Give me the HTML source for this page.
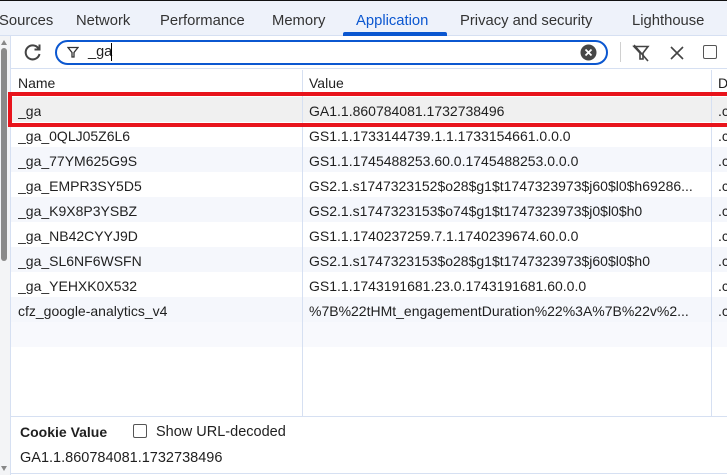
<!DOCTYPE html>
<html><head><style>
*{margin:0;padding:0;box-sizing:border-box}
body{width:727px;height:475px;overflow:hidden;background:#fff;font-family:"Liberation Sans",sans-serif;font-size:14px;color:#1f1f1f;position:relative}
.abs{position:absolute}
.tabs{left:0;top:0;width:727px;height:36px;background:#eef2fa;border-top:1px solid #111;border-bottom:1px solid #d6e0f2}
.tab{position:absolute;top:12px;font-size:14.8px;color:#333}
.cell{position:absolute;white-space:nowrap;overflow:hidden;font-size:14px;color:#1f1f1f}
</style></head><body>
<div class="abs tabs">
<span class="tab" style="left:-1px">Sources</span>
<span class="tab" style="left:76px">Network</span>
<span class="tab" style="left:160px">Performance</span>
<span class="tab" style="left:272px">Memory</span>
<span class="tab" style="left:356px;color:#0b57d0">Application</span>
<span class="tab" style="left:460px">Privacy and security</span>
<span class="tab" style="left:632px">Lighthouse</span>
<div class="abs" style="left:343px;top:31px;width:104px;height:4px;background:#0b57d0;border-radius:2px 2px 0 0"></div>
</div>
<div class="abs" style="left:0;top:36px;width:11px;height:439px;background:#f3f4f6;border-right:1px solid #d6e0f2"></div>
<div class="abs" style="left:1px;top:48px;width:6px;height:213px;background:#8a8a8a;border-radius:3px"></div>
<div class="abs" style="left:1px;top:40px;width:0;height:0;border-left:3px solid transparent;border-right:3px solid transparent;border-bottom:5px solid #888"></div>
<div class="abs" style="left:1px;top:466px;width:0;height:0;border-left:3px solid transparent;border-right:3px solid transparent;border-top:5px solid #888"></div>
<div class="abs" style="left:11px;top:36px;width:716px;height:33px;background:#fff;border-bottom:1px solid #d6e0f2"></div>
<svg class="abs" style="left:23px;top:42px" width="20" height="20" viewBox="0 0 20 20"><path d="M15.5 6.5A7 7 0 1 0 16.5 12" fill="none" stroke="#444" stroke-width="2"/><path d="M16.5 2.5v5h-5" fill="none" stroke="#444" stroke-width="2"/></svg>
<div class="abs" style="left:55px;top:40px;width:553px;height:25px;border:2px solid #0b57d0;border-radius:13px"></div>
<svg class="abs" style="left:67px;top:46px" width="12" height="12" viewBox="0 0 12 12"><path d="M1 1.5h10L7 6.5v4.5H5V6.5z" fill="none" stroke="#333" stroke-width="1.3"/></svg>
<span class="abs" style="left:88px;top:44px;font-size:14.5px">_ga</span>
<div class="abs" style="left:111px;top:43px;width:1px;height:18px;background:#000"></div>
<svg class="abs" style="left:580px;top:44px" width="17" height="17" viewBox="0 0 17 17"><circle cx="8.5" cy="8.5" r="8" fill="#474747"/><path d="M5.5 5.5l6 6M11.5 5.5l-6 6" stroke="#fff" stroke-width="1.8"/></svg>
<div class="abs" style="left:620px;top:42px;width:1px;height:20px;background:#d0d0d0"></div>
<svg class="abs" style="left:631px;top:43px" width="20" height="20" viewBox="0 0 20 20"><path d="M3 3.5h14L12 10v6H9v-6z" fill="none" stroke="#444" stroke-width="1.6"/><path d="M3 2l14 16" stroke="#444" stroke-width="1.6"/></svg>
<svg class="abs" style="left:669px;top:45px" width="16" height="16" viewBox="0 0 16 16"><path d="M2 2l12 12M14 2L2 14" stroke="#444" stroke-width="1.6"/></svg>
<div class="abs" style="left:703px;top:45px;width:14px;height:14px;border:1.5px solid #555;border-radius:2px"></div>
<div class="abs" style="left:11px;top:70px;width:716px;height:25px;background:#fff;border-bottom:1px solid #d6e0f2"></div>
<span class="cell" style="left:18px;top:75px">Name</span>
<span class="cell" style="left:309px;top:75px">Value</span>
<span class="cell" style="left:718px;top:75px">D</span>
<div class="abs" style="left:11px;top:97px;width:716px;height:25px;background:#f0f0f0"></div>
<div class="abs" style="left:11px;top:147px;width:716px;height:25px;background:#f5f7fc"></div>
<div class="abs" style="left:11px;top:197px;width:716px;height:25px;background:#f5f7fc"></div>
<div class="abs" style="left:11px;top:247px;width:716px;height:25px;background:#f5f7fc"></div>
<div class="abs" style="left:11px;top:297px;width:716px;height:25px;background:#f5f7fc"></div>
<div class="abs" style="left:11px;top:322px;width:716px;height:25px;background:#f8f9fd"></div>
<div class="abs" style="left:302px;top:70px;width:1px;height:346px;background:#d6e0f2"></div>
<div class="abs" style="left:711px;top:70px;width:1px;height:346px;background:#d6e0f2"></div>
<div class="abs" style="left:8px;top:92px;width:725px;height:35px;border:4px solid #e8141c"></div>

<span class="cell" style="left:18px;top:103px">_ga</span><span class="cell" style="left:309px;top:103px">GA1.1.860784081.1732738496</span><span class="cell" style="left:718px;top:103px">.c</span>
<span class="cell" style="left:18px;top:128px">_ga_0QLJ05Z6L6</span><span class="cell" style="left:309px;top:128px">GS1.1.1733144739.1.1.1733154661.0.0.0</span><span class="cell" style="left:718px;top:128px">.c</span>
<span class="cell" style="left:18px;top:153px">_ga_77YM625G9S</span><span class="cell" style="left:309px;top:153px">GS1.1.1745488253.60.0.1745488253.0.0.0</span><span class="cell" style="left:718px;top:153px">.c</span>
<span class="cell" style="left:18px;top:178px">_ga_EMPR3SY5D5</span><span class="cell" style="left:309px;top:178px;width:396px">GS2.1.s1747323152$o28$g1$t1747323973$j60$l0$h69286...</span><span class="cell" style="left:718px;top:178px">.c</span>
<span class="cell" style="left:18px;top:203px">_ga_K9X8P3YSBZ</span><span class="cell" style="left:309px;top:203px">GS2.1.s1747323153$o74$g1$t1747323973$j0$l0$h0</span><span class="cell" style="left:718px;top:203px">.c</span>
<span class="cell" style="left:18px;top:228px">_ga_NB42CYYJ9D</span><span class="cell" style="left:309px;top:228px">GS1.1.1740237259.7.1.1740239674.60.0.0</span><span class="cell" style="left:718px;top:228px">.c</span>
<span class="cell" style="left:18px;top:253px">_ga_SL6NF6WSFN</span><span class="cell" style="left:309px;top:253px">GS2.1.s1747323153$o28$g1$t1747323973$j60$l0$h0</span><span class="cell" style="left:718px;top:253px">.c</span>
<span class="cell" style="left:18px;top:278px">_ga_YEHXK0X532</span><span class="cell" style="left:309px;top:278px">GS1.1.1743191681.23.0.1743191681.60.0.0</span><span class="cell" style="left:718px;top:278px">.c</span>
<span class="cell" style="left:18px;top:303px">cfz_google-analytics_v4</span><span class="cell" style="left:309px;top:303px;width:396px">%7B%22tHMt_engagementDuration%22%3A%7B%22v%2...</span><span class="cell" style="left:718px;top:303px">.c</span>
<div class="abs" style="left:11px;top:416px;width:716px;height:1px;background:#d6e0f2"></div>
<span class="abs" style="left:20px;top:424px;font-weight:bold;font-size:14px">Cookie Value</span>
<div class="abs" style="left:133px;top:424px;width:14px;height:14px;border:1.5px solid #555;border-radius:2px"></div>
<span class="abs" style="left:156px;top:424px;font-size:14.5px">Show URL-decoded</span>
<span class="abs" style="left:20px;top:450px;font-size:14.5px">GA1.1.860784081.1732738496</span>
<div class="abs" style="left:11px;top:473px;width:716px;height:1px;background:#d6e0f2"></div>
</body></html>
